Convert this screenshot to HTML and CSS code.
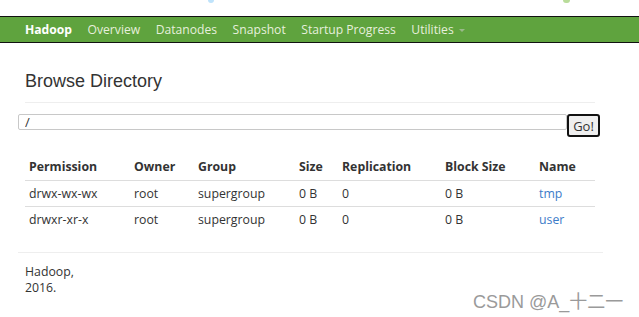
FILE: index.html
```html
<!DOCTYPE html>
<html>
<head>
<meta charset="utf-8">
<link rel="stylesheet" href="styles.css">
</head>
<body>
<div class="top">
  <span class="blob blob-blue"></span>
  <span class="blob blob-green"></span>
</div>
<nav class="navbar">
  <a class="brand">Hadoop</a>
  <a class="nav-link">Overview</a>
  <a class="nav-link">Datanodes</a>
  <a class="nav-link">Snapshot</a>
  <a class="nav-link">Startup Progress</a>
  <a class="nav-link">Utilities <span class="caret"></span></a>
</nav>
<main class="container">
  <div class="page-header">
    <h1>Browse Directory</h1>
  </div>
  <div class="search">
    <input class="path" type="text" value="/">
    <button class="go">Go!</button>
  </div>
  <table class="listing">
    <thead>
      <tr>
        <th class="c-perm">Permission</th>
        <th class="c-owner">Owner</th>
        <th class="c-group">Group</th>
        <th class="c-size">Size</th>
        <th class="c-rep">Replication</th>
        <th class="c-block">Block Size</th>
        <th class="c-name">Name</th>
      </tr>
    </thead>
    <tbody>
      <tr>
        <td>drwx-wx-wx</td><td>root</td><td>supergroup</td><td>0 B</td><td>0</td><td>0 B</td><td><a class="link">tmp</a></td>
      </tr>
      <tr>
        <td>drwxr-xr-x</td><td>root</td><td>supergroup</td><td>0 B</td><td>0</td><td>0 B</td><td><a class="link">user</a></td>
      </tr>
    </tbody>
  </table>
  <footer class="footer">
    <p>Hadoop,<br>2016.</p>
  </footer>
</main>
<div class="watermark">CSDN @A_十二一</div>
</body>
</html>
```
FILE: styles.css
```css
* { box-sizing: border-box; }
html, body { margin: 0; padding: 0; background: #fff; }
body {
  font-family: "Open Sans", "Noto Sans", "Noto Sans CJK SC", sans-serif;
  font-size: 12.3px;
  color: #333;
  width: 639px;
  height: 317px;
  overflow: hidden;
  position: relative;
}
.top { height: 16px; position: relative; }
.blob { position: absolute; top: 0; height: 3px; border-radius: 0 0 3px 3px; }
.blob-blue { left: 208px; width: 6px; background: #bfe3fb; }
.blob-green { left: 563px; width: 7px; background: #b9dc9a; }

.navbar {
  height: 27px;
  background: #5fa33e;
  border-top: 1px solid #111;
  border-bottom: 1px solid #111;
  display: flex;
  align-items: center;
  padding-left: 25px;
  gap: 15.5px;
}
.navbar a { color: #e6efdc; font-size: 12.15px; line-height: 25px; white-space: nowrap; }
.navbar .brand { color: #fff; font-weight: 700; }
.caret {
  display: inline-block;
  width: 0; height: 0;
  margin-left: 2px;
  vertical-align: middle;
  border-top: 3px solid #9ab98a;
  border-left: 3px solid transparent;
  border-right: 3px solid transparent;
}

.container { padding: 0 44px 0 25px; }
.page-header {
  padding-top: 27px;
  padding-bottom: 9px;
  border-bottom: 1px solid #eee;
  margin-bottom: 11px;
}
h1 {
  margin: 0;
  font-family: "Liberation Sans", Arial, sans-serif;
  font-weight: 400;
  font-size: 18px;
  line-height: 23px;
  color: #333;
}
.search { display: flex; align-items: flex-start; margin-left: -7px; margin-right: -5px; }
.path {
  width: 550px;
  height: 16px;
  border: 1px solid #c8c8c8;
  border-radius: 2px;
  padding: 0 6px;
  font-family: "Open Sans", sans-serif;
  font-size: 13px;
  line-height: 14px;
  color: #333;
  outline: none;
}
.go {
  width: 33px;
  height: 23px;
  margin: 0;
  padding: 0;
  border: 2px solid #111;
  border-radius: 3px;
  background: #efefef;
  font-family: "Open Sans", sans-serif;
  font-size: 13px;
  color: #333;
}
.listing {
  width: 570px;
  margin-top: 17px;
  border-collapse: collapse;
}
.listing th, .listing td {
  text-align: left;
  padding: 0 4px;
  height: 26px;
  white-space: nowrap;
}
.listing th { font-weight: 700; border-bottom: 1px solid #ddd; }
.listing tbody tr:first-child td { border-bottom: 1px solid #ddd; }
.c-perm { width: 105px; }
.c-owner { width: 64px; }
.c-group { width: 101px; }
.c-size { width: 43px; }
.c-rep { width: 103px; }
.c-block { width: 94px; }
.link { color: #3d7cc9; text-decoration: none; }
.footer {
  margin: 20px -8px 0 -7px;
  border-top: 1px solid #eee;
  padding: 11px 0 0 7px;
}
.footer p { margin: 0; line-height: 16px; }
.watermark {
  position: absolute;
  left: 473px;
  top: 287px;
  font-family: "Liberation Sans", "Noto Sans CJK SC", sans-serif;
  font-size: 18px;
  color: #9a9a9a;
  white-space: nowrap;
}
```
